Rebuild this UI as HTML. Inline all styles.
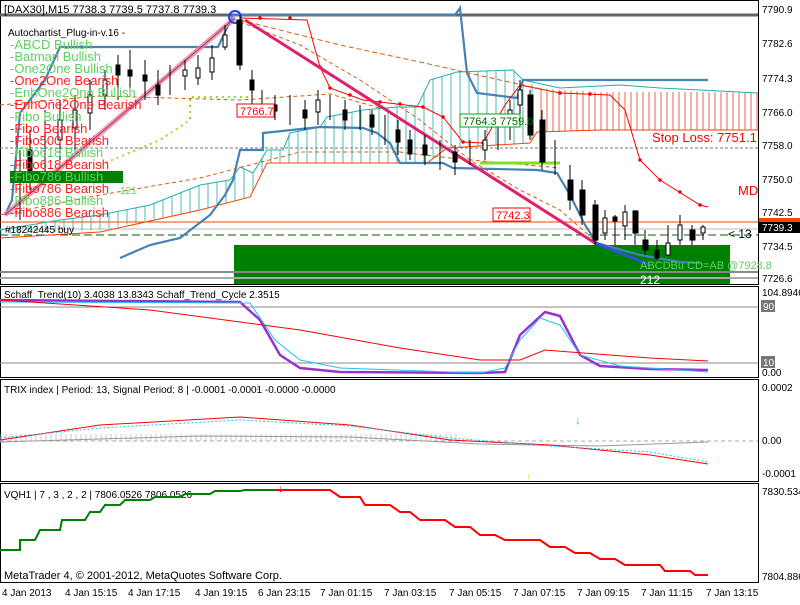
<!DOCTYPE html>
<html><head><meta charset="utf-8"><style>
body{margin:0;background:#fff;width:800px;height:600px;overflow:hidden}
svg text{font-family:"Liberation Sans",sans-serif}
</style></head><body>
<svg width="800" height="600" viewBox="0 0 800 600" xmlns="http://www.w3.org/2000/svg">
<defs>
<pattern id="h" width="6" height="6" patternUnits="userSpaceOnUse"><line x1="1" y1="0" x2="1" y2="6" stroke="#e04020" stroke-width="0.8"/></pattern>
<pattern id="ht" width="9" height="6" patternUnits="userSpaceOnUse"><line x1="1" y1="0" x2="1" y2="6" stroke="#20a8a8" stroke-width="0.8"/></pattern>
<pattern id="tq" width="5" height="5" patternUnits="userSpaceOnUse"><line x1="1" y1="0" x2="1" y2="5" stroke="#bbb" stroke-width="0.8"/></pattern>
</defs>
<rect width="800" height="600" fill="#fff"/>
<g fill="none" stroke="#000" stroke-width="1">
<rect x="0.5" y="0.5" width="758" height="284"/>
<rect x="0.5" y="286.5" width="758" height="91"/>
<rect x="0.5" y="379.5" width="758" height="102"/>
<rect x="0.5" y="483.5" width="758" height="99"/>
</g>
<!-- main panel -->
<rect x="234" y="245" width="496" height="39" fill="#008000"/>
<line x1="0" y1="15" x2="758" y2="15" stroke="#666" stroke-width="3"/>
<line x1="0" y1="222" x2="758" y2="222" stroke="#ff4000" stroke-width="1"/>
<line x1="0" y1="229" x2="758" y2="229" stroke="#bbb" stroke-width="1"/>
<line x1="0" y1="235" x2="758" y2="235" stroke="#060" stroke-dasharray="8,4"/>
<line x1="0" y1="272" x2="758" y2="272" stroke="#888" stroke-width="2"/>
<line x1="0" y1="278" x2="758" y2="278" stroke="#aaa" stroke-width="2"/>
<line x1="0" y1="148" x2="758" y2="148" stroke="#777" stroke-dasharray="3,2"/>
<!-- kumo: teal-hatched part -->
<path d="M0,230 L30,225 L60,220 L100,215 L150,205 L200,185 L230,180 L240,167 L253,173 L267,150 L283,150 L290,133 L320,127 L327,117 L363,110 L397,107 L417,107 L430,80 L457,72 L513,70 L523,80 L540,88 L540,132 L530,143 L447,148 L427,163 L267,163 L250,197 L200,210 L150,220 L100,230 L0,235Z" fill="url(#ht)"/>
<path d="M0,230 L30,225 L60,220 L100,215 L150,205 L200,185 L230,180 L240,167 L253,173 L267,150 L283,150 L290,133 L320,127 L327,117 L363,110 L397,107 L417,107 L430,80 L457,72 L513,70 L523,80 L560,88 L620,85 L660,88 L700,90 L758,93" fill="none" stroke="#20b0b0"/>
<!-- kumo red part -->
<path d="M540,88 L560,90 L600,92 L660,92 L700,92 L758,93 L758,130 L700,130 L650,130 L600,130 L560,132 L540,132Z" fill="url(#h)"/>
<path d="M0,238 L100,232 L200,210 L250,197 L267,163 L427,163 L447,148 L530,143 L537,132 L600,130 L758,130" fill="none" stroke="#ff4000"/>
<!-- blue lines -->
<path d="M5,215 L12,200 L20,113 L45,80 L60,47 L218,47 L233,15 L455,15 L460,8 L467,73 L477,93 L517,98 L523,80 L708,80" fill="none" stroke="#4682b4" stroke-width="2.2"/>
<path d="M120,258 L150,245 L180,238 L210,215 L225,195 L233,180 L240,150 L263,150 L263,133 L320,127 L363,128 L377,133 L390,143 L400,163 L443,163 L453,168 L537,170 L557,173 L570,195 L585,225 L597,243 L640,255 L680,262 L700,263" fill="none" stroke="#4682b4" stroke-width="2.2"/>
<!-- red dotted series -->
<path d="M240,18 L307,20 L320,67 L330,88 L363,100 L423,107 L443,117 L463,142 L483,143 L505,105 L520,85 L560,93 L610,95 L625,110 L640,160 L660,180 L700,205 L708,207" fill="none" stroke="#ff0000"/>
<g fill="#f00"><circle cx="260" cy="18" r="1.8"/><circle cx="290" cy="18" r="1.8"/><circle cx="320" cy="67" r="1.8"/><circle cx="330" cy="88" r="1.8"/><circle cx="350" cy="95" r="1.8"/><circle cx="380" cy="102" r="1.8"/><circle cx="400" cy="104" r="1.8"/><circle cx="423" cy="107" r="1.8"/><circle cx="443" cy="117" r="1.8"/><circle cx="463" cy="142" r="1.8"/><circle cx="483" cy="143" r="1.8"/><circle cx="560" cy="93" r="1.8"/><circle cx="590" cy="94" r="1.8"/><circle cx="640" cy="160" r="1.8"/><circle cx="660" cy="180" r="1.8"/><circle cx="680" cy="192" r="1.8"/><circle cx="700" cy="205" r="1.8"/></g>
<path d="M240,20 L340,45 L420,62 L500,80 L560,93" fill="none" stroke="#d06010" stroke-dasharray="5,3"/>
<path d="M240,22 L300,45 L360,80 L420,120 L470,160 L520,190 L560,210 L600,245" fill="none" stroke="#d06010" stroke-dasharray="4,3"/>
<path d="M0,105 L100,96 L240,100 L330,94 L380,108" fill="none" stroke="#d06010" stroke-dasharray="4,3"/>
<path d="M0,215 L100,195 L200,178 L250,165 L300,152 L400,152 L450,158 L560,168" fill="none" stroke="#d06010" stroke-dasharray="4,3"/>
<path d="M100,165 L160,140 L190,120 L190,97 L250,97" fill="none" stroke="#90e020" stroke-dasharray="2,4" stroke-width="2"/>
<path d="M480,163 L560,163" stroke="#80e020" stroke-width="3"/>
<!-- pattern lines -->
<path d="M5,215 L235,18" stroke="#f08080" stroke-width="5" opacity="0.8"/>
<path d="M5,215 L235,18" stroke="#9030c0" stroke-width="1"/>
<path d="M245,20 L595,243" stroke="#e0206a" stroke-width="3"/>
<path d="M595,243 L650,265" stroke="#3050e0" stroke-width="3"/>
<circle cx="235" cy="17" r="6" fill="none" stroke="#2040ff" stroke-width="2"/>
<!-- candles -->
<g stroke="#000" stroke-width="1">
<path d="M20,150V220 M30,130V190 M45,110V180 M60,100V160 M75,95V150 M90,80V130 M105,70V110 M118,55V100 M130,50V90 M145,60V100 M158,70V105 M170,65V95 M185,60V90 M198,55V85 M212,45V80 M225,25V50 M240,15V70 M252,70V110 M262,90V115 M275,95V120 M290,95V125 M305,100V130 M318,90V125 M330,95V120 M345,100V130 M360,105V130 M372,110V135 M385,115V145 M398,120V155 M410,130V160 M425,135V165 M440,140V170 M455,145V175 M470,140V165 M485,130V160 M498,120V150 M510,100V140 M520,80V120 M530,90V140 M542,110V170 M555,140V175 M570,165V210 M582,180V225 M595,200V245 M605,210V240 M615,215V245 M625,205V240 M635,210V245 M645,230V255 M657,240V260 M668,225V255 M680,215V245 M692,225V245 M703,225V240"/>
</g>
<g stroke="#000" fill="#000">
<rect x="28" y="150" width="4" height="25"/><rect x="58" y="120" width="4" height="20" fill="#fff"/>
<rect x="73" y="110" width="4" height="18" fill="#fff"/><rect x="88" y="95" width="4" height="18" fill="#fff"/>
<rect x="103" y="80" width="4" height="15" fill="#fff"/><rect x="116" y="65" width="4" height="10"/>
<rect x="128" y="70" width="4" height="6"/><rect x="143" y="75" width="4" height="6"/>
<rect x="156" y="85" width="4" height="10"/><rect x="183" y="70" width="4" height="6" fill="#fff"/>
<rect x="196" y="68" width="4" height="10" fill="#fff"/><rect x="210" y="58" width="4" height="14" fill="#fff"/>
<rect x="223" y="35" width="4" height="12" fill="#fff"/><rect x="237" y="20" width="5" height="45"/>
<rect x="250" y="80" width="4" height="10"/><rect x="273" y="105" width="4" height="6"/>
<rect x="303" y="110" width="4" height="8"/><rect x="316" y="100" width="4" height="12" fill="#fff"/>
<rect x="343" y="110" width="4" height="10"/><rect x="370" y="115" width="4" height="12"/>
<rect x="396" y="130" width="4" height="12"/><rect x="408" y="140" width="4" height="14"/>
<rect x="423" y="145" width="4" height="10"/><rect x="453" y="152" width="4" height="10"/>
<rect x="483" y="140" width="4" height="10" fill="#fff"/><rect x="508" y="110" width="4" height="15" fill="#fff"/>
<rect x="518" y="90" width="4" height="15" fill="#fff"/><rect x="528" y="95" width="5" height="40"/>
<rect x="540" y="120" width="5" height="42"/><rect x="568" y="180" width="5" height="20"/>
<rect x="580" y="190" width="5" height="25"/><rect x="593" y="205" width="5" height="35"/>
<rect x="603" y="218" width="4" height="15" fill="#fff"/><rect x="613" y="217" width="4" height="4"/>
<rect x="623" y="212" width="4" height="14" fill="#fff"/><rect x="633" y="211" width="5" height="22"/>
<rect x="643" y="240" width="5" height="10"/><rect x="655" y="250" width="4" height="8"/>
<rect x="666" y="243" width="4" height="12" fill="#fff"/><rect x="678" y="225" width="4" height="15" fill="#fff"/>
<rect x="690" y="230" width="5" height="10"/><rect x="701" y="227" width="4" height="6" fill="#fff"/>
</g>
<!-- labels main -->
<text x="4" y="13" font-size="11">[DAX30],M15  7738.3 7739.5 7737.8 7739.3</text>
<text x="8" y="36" font-size="10">Autochartist_Plug-in-v.16 -</text>
<g font-size="13">
<text x="10" y="49" fill="#60d060">-ABCD Bullish</text>
<text x="10" y="61" fill="#60d060">-Batman Bullish</text>
<text x="10" y="73" fill="#60d060">-One2One Bullish</text>
<text x="10" y="85" fill="#ff2020">-One2One Bearish</text>
<text x="10" y="97" fill="#60d060">-EnhOne2One Bullish</text>
<text x="10" y="109" fill="#ff2020">-EnhOne2One Bearish</text>
<text x="10" y="121" fill="#60d060">-Fibo Bullish</text>
<text x="10" y="133" fill="#ff2020">-Fibo Bearish</text>
<text x="10" y="145" fill="#ff2020">-Fibo500 Bearish</text>
<text x="10" y="157" fill="#60d060">-Fibo618 Bullish</text>
<text x="10" y="169" fill="#ff2020">-Fibo618 Bearish</text>
<rect x="10" y="171" width="113" height="12" fill="#008000"/>
<text x="10" y="181" fill="#60d060">-Fibo786 Bullish</text>
<text x="10" y="193" fill="#ff2020">-Fibo786 Bearish</text>
<text x="10" y="205" fill="#60d060">-Fibo886 Bullish</text>
<text x="10" y="217" fill="#ff2020">-Fibo886 Bearish</text>
</g>
<text x="120" y="194" font-size="10" fill="#60d060">121</text>
<text x="5" y="233" font-size="10">#18242445 buy</text>
<rect x="237" y="104" width="37" height="13" fill="#fff" stroke="#f00"/><text x="240" y="115" font-size="11" fill="#f00">7766.7</text>
<rect x="460" y="114" width="60" height="13" fill="#fff" stroke="#0a0"/><text x="463" y="125" font-size="11" fill="#060">7764.3 7759.0</text>
<rect x="493" y="208" width="37" height="13" fill="#fff" stroke="#f00"/><text x="496" y="219" font-size="11" fill="#f00">7742.3</text>
<text x="652" y="142" font-size="13" fill="#f00">Stop Loss: 7751.1</text>
<text x="738" y="195" font-size="13" fill="#f00">MD</text>
<text x="728" y="238" font-size="12">&lt; 13</text>
<text x="640" y="269" font-size="11" fill="#60d060">ABCDBu CD=AB  @7928.8</text>
<text x="640" y="284" font-size="12" fill="#fff">212</text>
<g font-size="10">
<text x="762" y="13">7790.9</text><text x="762" y="47">7782.6</text><text x="762" y="82">7774.3</text>
<text x="762" y="116">7766.0</text><text x="762" y="149">7758.0</text><text x="762" y="183">7750.0</text>
<text x="762" y="216">7742.5</text><text x="762" y="250">7734.5</text><text x="762" y="282">7726.6</text>
</g>
<rect x="759" y="218" width="41" height="5" fill="#ff4000"/>
<rect x="759" y="222" width="41" height="11" fill="#000"/><text x="762" y="231" font-size="10" fill="#fff">7739.3</text>
<!-- Schaff -->
<text x="4" y="298" font-size="10">Schaff_Trend(10) 3.4038 13.8343  Schaff_Trend_Cycle 2.3515</text>
<line x1="0" y1="307" x2="758" y2="307" stroke="#888"/><line x1="0" y1="363" x2="758" y2="363" stroke="#888"/>
<path d="M0,300 L240,302 L260,320 L280,355 L300,368 L340,372 L480,373 L505,372 L520,335 L545,312 L560,316 L580,355 L600,366 L650,369 L708,370" fill="none" stroke="#9933cc" stroke-width="2.5"/>
<path d="M0,302 L250,303 L275,340 L300,360 L340,368 L480,373 L505,368 L520,340 L540,318 L560,325 L580,355 L620,366 L708,372" fill="none" stroke="#20c0ff"/>
<path d="M0,300 L150,310 L300,330 L400,348 L480,360 L520,360 L545,350 L570,352 L650,358 L708,361" fill="none" stroke="#f00"/>
<g font-size="10"><text x="762" y="296">104.8946</text><text x="762" y="376">0.00</text></g>
<rect x="761" y="300" width="14" height="12" fill="#777"/><text x="763" y="310" font-size="10" fill="#fff">90</text>
<rect x="761" y="356" width="14" height="12" fill="#777"/><text x="763" y="366" font-size="10" fill="#fff">10</text>
<!-- TRIX -->
<text x="4" y="393" font-size="10">TRIX index | Period: 13, Signal Period: 8 |  -0.0001 -0.0001 -0.0000 -0.0000</text>
<line x1="0" y1="441" x2="758" y2="441" stroke="#aaa" stroke-dasharray="4,3"/>
<rect x="0" y="434" width="460" height="7" fill="url(#tq)"/>
<path d="M0,442 L200,436 L350,437 L480,444 L600,446 L708,442" fill="none" stroke="#999"/>
<path d="M0,440 L100,425 L240,417 L350,425 L450,440 L550,445 L650,455 L708,464" fill="none" stroke="#f00"/>
<path d="M0,438 L100,428 L240,420 L350,426 L450,438 L550,446 L650,452 L708,462" fill="none" stroke="#20c0ff" stroke-dasharray="2,2"/>
<text x="575" y="424" font-size="12" fill="#20c0ff">↓</text><text x="526" y="481" font-size="12" fill="#e0e000">↑</text>
<text x="255" y="390" font-size="11" fill="#20c0ff">↓</text>
<g font-size="10"><text x="762" y="391">0.0002</text><text x="762" y="444">0.00</text><text x="762" y="477">-0.0001</text></g>
<!-- VQH -->
<text x="4" y="498" font-size="10">VQH1 | 7 , 3 , 2 , 2 | 7806.0526 7806.0526</text>
<path d="M0,550 L20,550 L20,540 L35,540 L40,530 L60,530 L62,520 L85,520 L90,512 L100,512 L105,505 L120,505 L125,500 L150,500 L155,497 L180,497 L185,494 L210,494 L215,491 L240,491 L245,490 L275,490" fill="none" stroke="#008000" stroke-width="2"/>
<path d="M275,490 L330,490 L340,497 L360,497 L365,505 L390,505 L400,512 L410,512 L420,520 L445,520 L455,527 L470,527 L480,535 L495,535 L505,540 L540,540 L550,547 L565,547 L575,553 L590,553 L600,559 L615,559 L625,565 L660,565 L665,571 L690,571 L695,575 L708,575" fill="none" stroke="#f00" stroke-width="2"/>
<text x="278" y="492" font-size="11" fill="#f00">↓</text>
<text x="4" y="579" font-size="11">MetaTrader 4, © 2001-2012, MetaQuotes Software Corp.</text>
<g font-size="10"><text x="762" y="495">7830.534</text><text x="762" y="580">7804.886</text></g>
<g font-size="10">
<text x="2" y="596">4 Jan 2013</text><text x="65" y="596">4 Jan 15:15</text><text x="128" y="596">4 Jan 17:15</text>
<text x="195" y="596">4 Jan 19:15</text><text x="258" y="596">6 Jan 23:15</text><text x="320" y="596">7 Jan 01:15</text>
<text x="384" y="596">7 Jan 03:15</text><text x="449" y="596">7 Jan 05:15</text><text x="513" y="596">7 Jan 07:15</text>
<text x="577" y="596">7 Jan 09:15</text><text x="641" y="596">7 Jan 11:15</text><text x="706" y="596">7 Jan 13:15</text>
</g>
</svg>
</body></html>
